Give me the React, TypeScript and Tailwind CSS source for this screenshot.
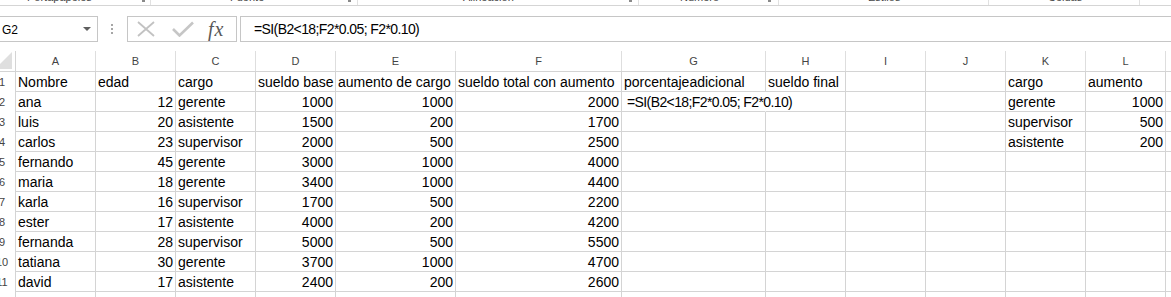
import React from "react";

type Cell = string | number | null;

const colWidths = [
  "w-[80px]",
  "w-[80px]",
  "w-[80px]",
  "w-[80px]",
  "w-[120px]",
  "w-[166px]",
  "w-[144px]",
  "w-[80px]",
  "w-[80px]",
  "w-[80px]",
  "w-[80px]",
  "w-[80px]",
];
const letters = ["A", "B", "C", "D", "E", "F", "G", "H", "I", "J", "K", "L"];

const formula = "=SI(B2<18;F2*0.05; F2*0.10)";

const rows: Cell[][] = [
  ["Nombre", "edad", "cargo", "sueldo base", "aumento de cargo", "sueldo total con aumento", "porcentajeadicional", "sueldo final", null, null, "cargo", "aumento"],
  ["ana", 12, "gerente", 1000, 1000, 2000, formula, null, null, null, "gerente", 1000],
  ["luis", 20, "asistente", 1500, 200, 1700, null, null, null, null, "supervisor", 500],
  ["carlos", 23, "supervisor", 2000, 500, 2500, null, null, null, null, "asistente", 200],
  ["fernando", 45, "gerente", 3000, 1000, 4000, null, null, null, null, null, null],
  ["maria", 18, "gerente", 3400, 1000, 4400, null, null, null, null, null, null],
  ["karla", 16, "supervisor", 1700, 500, 2200, null, null, null, null, null, null],
  ["ester", 17, "asistente", 4000, 200, 4200, null, null, null, null, null, null],
  ["fernanda", 28, "supervisor", 5000, 500, 5500, null, null, null, null, null, null],
  ["tatiana", 30, "gerente", 3700, 1000, 4700, null, null, null, null, null, null],
  ["david", 17, "asistente", 2400, 200, 2600, null, null, null, null, null, null],
];

// ribbon group captions, only their lower edge shows
const ribbonGroups = [
  { w: "w-[151px]", ml: "ml-[27px]", label: "Portapapeles", launcher: true, mr: "mr-[5px]" },
  { w: "w-[207px]", ml: "ml-[79px]", label: "Fuente", launcher: true, mr: "mr-[6px]" },
  { w: "w-[281px]", ml: "ml-[105px]", label: "Alineación", launcher: true, mr: "mr-[6px]" },
  { w: "w-[140px]", ml: "ml-[41px]", label: "Número", launcher: true, mr: "mr-[7px]" },
  { w: "w-[210px]", ml: "ml-[89px]", label: "Estilos", launcher: false, mr: "" },
  { w: "w-[151px]", ml: "ml-[59px]", label: "Celdas", launcher: false, mr: "" },
];

function RibbonStrip() {
  return (
    <div className="flex h-[6px] overflow-hidden border-b border-[#d5d5d5] text-[11px] leading-[13px] text-[#444]">
      {ribbonGroups.map((g) => (
        <div key={g.label} className={`${g.w} flex shrink-0 border-r border-[#e1e1e1]`}>
          <span className={`${g.ml} mt-[-9px] whitespace-nowrap`}>{g.label}</span>
          <div className="flex-1" />
          {g.launcher ? <div className={`${g.mr} h-[2px] w-[3px] bg-[#8a8a8a]`} /> : null}
        </div>
      ))}
      <div className="flex-1" />
    </div>
  );
}

function FormulaBar() {
  return (
    <div className="mt-[10px] flex h-[26px]">
      <div className="flex w-[98px] shrink-0 items-center border-y border-r border-[#c6c6c6]">
        <span className="pl-[2px] pt-[1px] text-[12px] leading-[24px] text-black">G2</span>
        <div className="flex-1" />
        <svg width="8" height="4" viewBox="0 0 8 4" className="mr-[6px]">
          <polygon points="0,0 8,0 4,4" fill="#5f5f5f" />
        </svg>
      </div>
      <div className="flex w-[29px] shrink-0 items-center justify-center">
        <div className="ml-[-1px] flex flex-col gap-[2px]">
          <div className="h-[2px] w-[2px] bg-[#a6a6a6]" />
          <div className="h-[2px] w-[2px] bg-[#a6a6a6]" />
          <div className="h-[2px] w-[2px] bg-[#a6a6a6]" />
        </div>
      </div>
      <div className="flex w-[110px] shrink-0 items-center border border-[#c6c6c6]">
        <svg width="18" height="16" viewBox="0 0 18 16" className="ml-[9px]">
          <path d="M1 1 L17 15 M17 1 L1 15" stroke="#c2c2c2" strokeWidth="1.8" fill="none" />
        </svg>
        <svg width="22" height="16" viewBox="0 0 22 16" className="ml-[17px]">
          <path d="M1 8 L7.5 14.5 L21 1.5" stroke="#c6c6c6" strokeWidth="2.6" fill="none" />
        </svg>
        <span className="ml-[14px] text-[20px] italic leading-[24px] text-[#595959] [font-family:'Liberation_Serif',serif]">
          f<span className="ml-[1px]">x</span>
        </span>
      </div>
      <div className="w-[3px] shrink-0" />
      <div className="flex flex-1 items-center border-y border-l border-[#c6c6c6]">
        <span className="pl-[13px] text-[14px] leading-[24px] tracking-[-0.6px] text-black">{formula}</span>
      </div>
    </div>
  );
}

function HeaderRow() {
  return (
    <div className="mt-[9px] flex h-[21px] border-b border-[#d4d4d4] text-[11px] leading-[20px] text-[#444]">
      <div className="w-[16px] shrink-0 border-r border-[#d4d4d4]">
        <svg width="15" height="20" viewBox="0 0 15 20">
          <polygon points="0,18 12,18 12,1 0,13" fill="#dfdfdf" />
        </svg>
      </div>
      {colWidths.map((w, i) => (
        <div key={letters[i]} className={`${w} shrink-0 border-r border-[#dedede] text-center`}>
          {letters[i]}
        </div>
      ))}
      <div className="flex-1" />
    </div>
  );
}

function RowHeader({ n }: { n: number }) {
  return (
    <div className="w-[16px] shrink-0 overflow-hidden border-r border-[#d4d4d4]">
      <div className="ml-[-12px] w-[28px] pt-[2px] text-center text-[11px] leading-[17px] text-[#444]">{n}</div>
    </div>
  );
}

function DataRow({ cells, n, last }: { cells: Cell[]; n: number; last?: boolean }) {
  return (
    <div className="flex h-[20px] text-[14px] text-black">
      <RowHeader n={n} />
      {colWidths.map((w, i) => {
        const v = cells[i];
        const isNum = typeof v === "number";
        const overflow = v === formula;
        return (
          <div
            key={i}
            className={`${w} shrink-0 whitespace-nowrap pt-[1px] leading-[18px] ${overflow ? "pl-[5px]" : "px-[2px]"} ${last ? "" : "border-b"} border-r border-[#d4d4d4] ${isNum ? "text-right" : "text-left"} ${overflow ? "relative z-10 overflow-visible border-r-transparent tracking-[-0.6px]" : "overflow-hidden"}`}
          >
            {v}
          </div>
        );
      })}
      <div className={`flex-1 ${last ? "" : "border-b"} border-[#d4d4d4]`} />
    </div>
  );
}

export default function App() {
  return (
    <div className="h-[297px] w-[1171px] overflow-hidden bg-white [font-family:'Liberation_Sans',Arial,sans-serif]">
      <RibbonStrip />
      <FormulaBar />
      <HeaderRow />
      {rows.map((r, i) => (
        <DataRow key={i} cells={r} n={i + 1} />
      ))}
      <DataRow cells={[]} n={12} last />
    </div>
  );
}
